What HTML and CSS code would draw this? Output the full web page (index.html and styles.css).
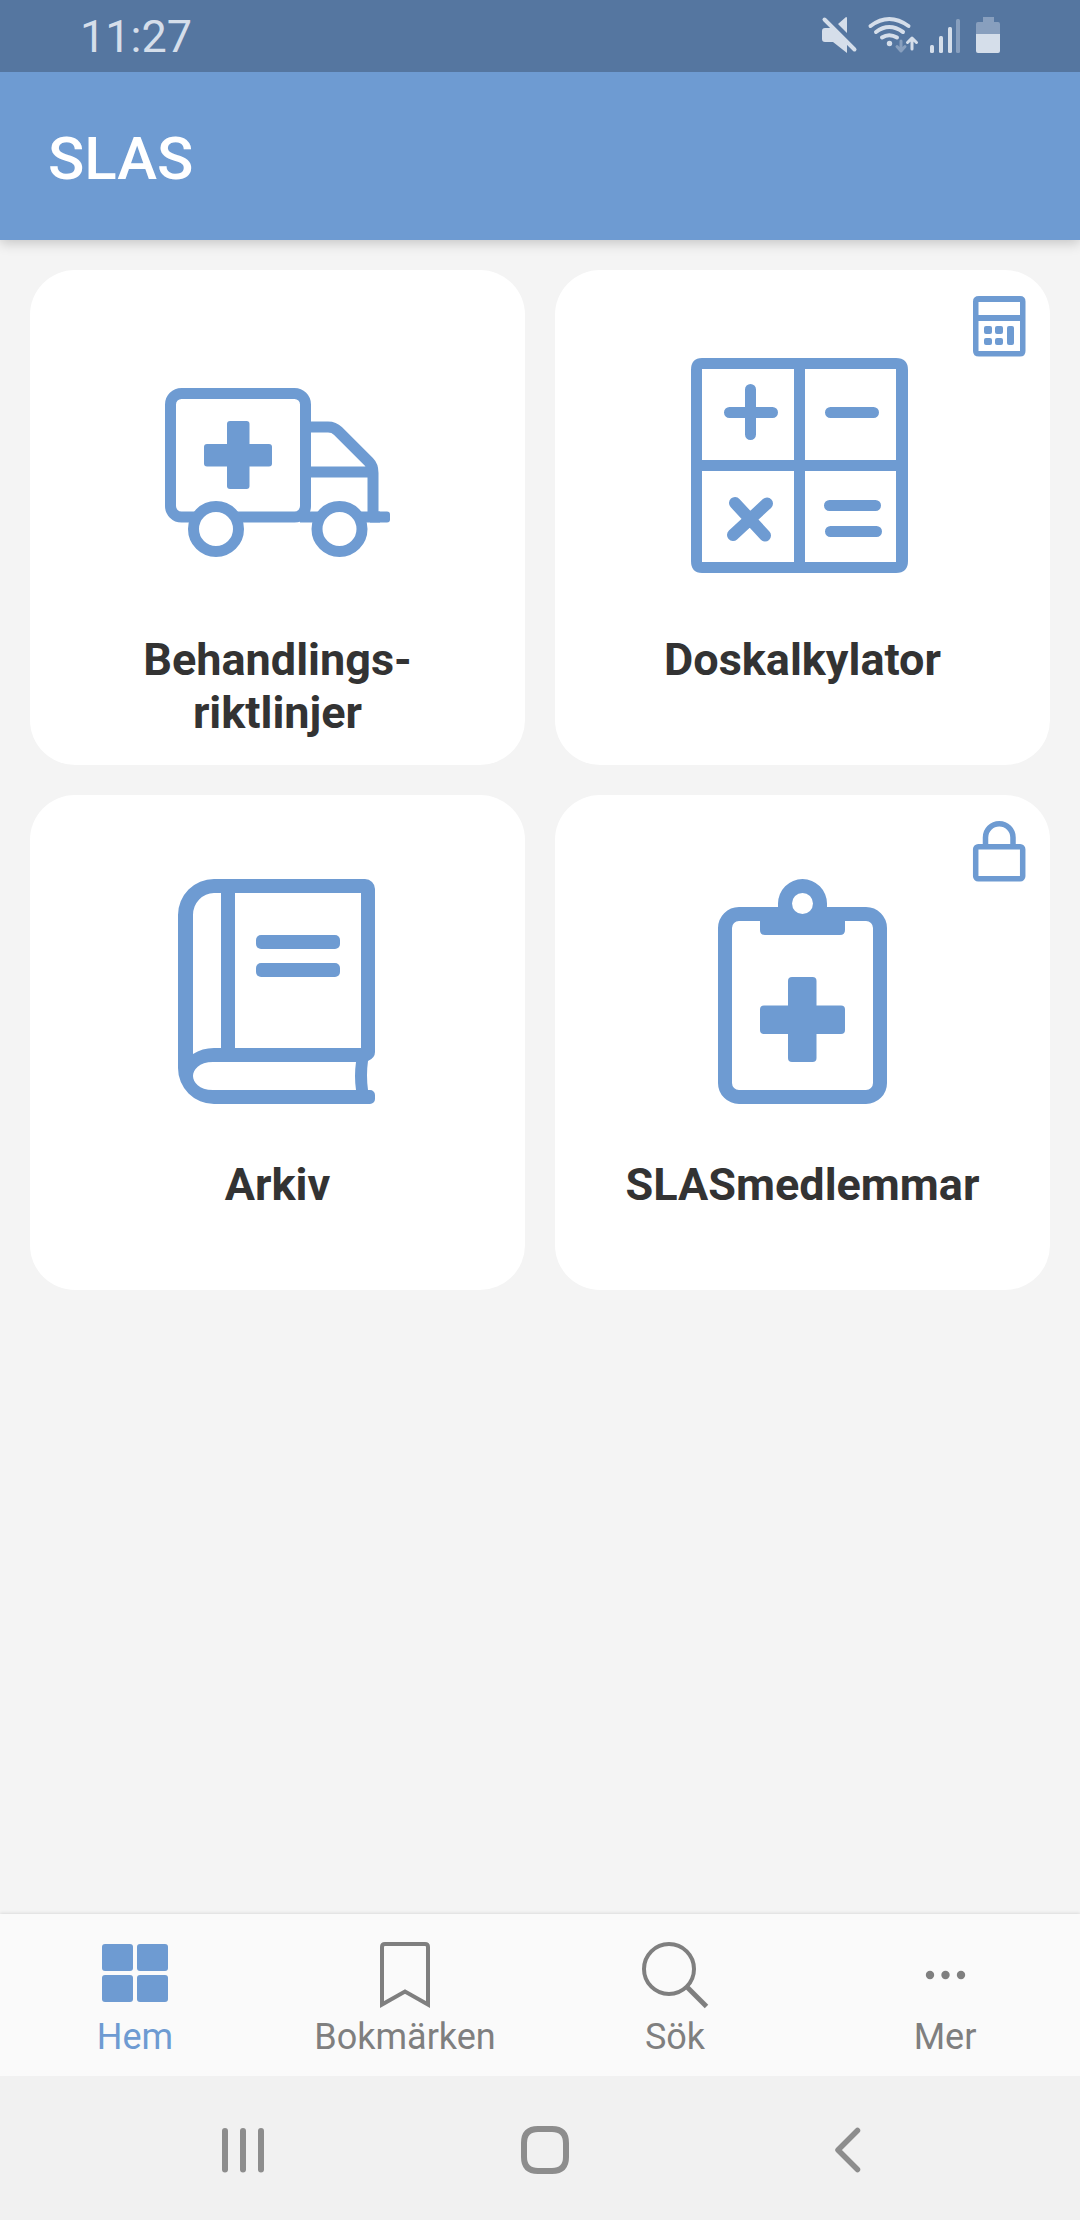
FILE: index.html
```html
<!DOCTYPE html>
<html lang="sv">
<head>
<meta charset="utf-8">
<meta name="viewport" content="width=device-width, initial-scale=1">
<title>SLAS</title>
<link rel="stylesheet" href="styles.css">
</head>
<body>
<div class="status-bar">
  <time class="clock">11:27</time>
  <svg class="status-icons" viewBox="820 0 180 72" aria-hidden="true">
    <path d="M822 31q0-3 3-3h6l16 16v9l-14-11h-8q-3 0-3-3zM838 24l8-7q1 0 1 1v15z"/>
    <path class="line" d="M824.500 19.500l30 30" stroke-width="4"/>
    <g class="line" stroke-width="4">
      <path d="M870.500 26q18.500-14 38 0M876 32q13-10 27 0M882 37.500q7-4.500 15 0"/>
    </g>
    <circle cx="889.500" cy="43.500" r="2.700"/>
    <path class="line dim" stroke-width="3" d="M901 41v10M897 46.500l4 4.500 4-4.500"/>
    <path class="line" stroke-width="3" d="M912 49v-11M907.500 42.500l4.500-4.500 4.500 4.500"/>
    <rect x="930" y="45" width="4" height="8" rx="1.500"/>
    <rect x="939" y="36" width="4" height="17" rx="1.500"/>
    <rect x="948" y="27" width="4" height="26" rx="1.500"/>
    <rect class="dim" x="956" y="19" width="4" height="34" rx="1.500"/>
    <path class="dim" d="M976 34V24q0-2 2-2h5v-5h11v5h4q2 0 2 2v10z"/>
    <path d="M976 34h24v17q0 2-2 2h-20q-2 0-2-2z"/>
  </svg>
</div>

<header class="app-bar"><h1 class="app-title">SLAS</h1></header>

<main class="content">
  <div class="cards">
    <a class="card" href="#riktlinjer">
      <svg class="card-icon" viewBox="165 354 225 225" aria-hidden="true">
        <g fill="none" stroke="currentColor" stroke-width="11">
          <rect x="170.500" y="393.500" width="135" height="123.500" rx="11"/>
          <path d="M305 427h23q6 0 10 4l31 31q4 4 4 11v44M305 472h67M300 517h80"/>
        </g>
        <path d="M370 511.500h17q3 0 3 3v5q0 3-3 3h-17z"/>
        <circle cx="216" cy="529" r="22.500" fill="#fff" stroke="currentColor" stroke-width="11"/>
        <circle cx="339.500" cy="529" r="22.500" fill="#fff" stroke="currentColor" stroke-width="11"/>
        <rect x="227" y="421" width="22.500" height="68" rx="3"/>
        <rect x="204" y="444" width="68" height="22.500" rx="3"/>
      </svg>
      <span class="card-label">Behandlings-<br>riktlinjer</span>
    </a>
    <a class="card" href="#doskalkylator">
      <svg class="card-icon" viewBox="690 354 225 225" aria-hidden="true">
        <path fill-rule="evenodd" d="M702 358h194q12 0 12 12v191q0 12-12 12h-194q-11 0-11-12v-191q0-12 11-12zM702 369v91h92v-91zM805 369v91h91v-91zM702 471v91h92v-91zM805 471v91h91v-91z"/>
        <path class="line" stroke-width="11" d="M729.500 412.500h43M750.500 389.500v45M830.500 412.500h43M829.500 505.500h46M830.500 531.500h46"/>
        <path class="line" stroke-width="12" d="M735 503l30 32.500M767 503.500l-34 31.500"/>
      </svg>
      <span class="card-label">Doskalkylator</span>
      <svg class="badge" viewBox="972 296 54 62" aria-hidden="true">
        <path fill-rule="evenodd" d="M979 296h41q5.500 0 5.500 5.500v49.500q0 5.500-5.500 5.500h-41q-6 0-6-5.500v-49.500q0-5.500 6-5.500zM978.500 302v13h41.500v-13zM978.500 321v30h41.500v-30z"/>
        <rect x="984" y="326" width="8" height="8" rx="2"/>
        <rect x="995" y="326" width="8" height="8" rx="2"/>
        <rect x="984" y="338" width="8" height="7" rx="2"/>
        <rect x="995" y="338" width="8" height="7" rx="2"/>
        <rect x="1007" y="326" width="7" height="19" rx="2"/>
      </svg>
    </a>
    <a class="card" href="#arkiv">
      <svg class="card-icon" viewBox="165 879 225 225" aria-hidden="true">
        <path fill-rule="evenodd" d="M214 879h151a10 10 0 0 1 10 10v163q0 6-7 9-2 14 0 29h2a5 5 0 0 1 5 5v4a5 5 0 0 1-5 5H214a36 36 0 0 1-36-36V915a36 36 0 0 1 36-36zM221 893h-7a21 22 0 0 0-21 22v139q9-6 21-6h7zM235 893v155h126V893zM213 1062c-14 0-20 8-20 14s6 14 20 14h143q-2-14 0-28z"/>
        <rect x="256" y="935" width="84" height="14" rx="5"/>
        <rect x="256" y="963" width="84" height="14" rx="5"/>
      </svg>
      <span class="card-label">Arkiv</span>
    </a>
    <a class="card" href="#medlemmar">
      <svg class="card-icon" viewBox="690 879 225 225" aria-hidden="true">
        <rect x="725" y="914" width="155" height="183" rx="14" fill="none" stroke="currentColor" stroke-width="14"/>
        <path d="M760 914h18v-10.500a24.500 24.500 0 0 1 49 0V914h18v16q0 5-5 5h-75q-5 0-5-5z"/>
        <circle cx="802.500" cy="903.500" r="10.500" fill="#fff"/>
        <rect x="788" y="977" width="28.500" height="85" rx="4"/>
        <rect x="760" y="1005.500" width="85" height="28.500" rx="4"/>
      </svg>
      <span class="card-label">SLASmedlemmar</span>
      <svg class="badge" viewBox="972 821 54 62" aria-hidden="true">
        <path fill="none" stroke="currentColor" stroke-width="5.500" d="M985.500 846v-8.500a13.700 13.700 0 0 1 27.500 0v8.500"/>
        <rect x="975.700" y="846.700" width="47" height="32" rx="2.500" fill="none" stroke="currentColor" stroke-width="5.500"/>
      </svg>
    </a>
  </div>
</main>

<nav class="tabs">
  <a class="tab tab-active" href="#hem" aria-current="page">
    <svg class="tab-icon" viewBox="99 1940 72 76" aria-hidden="true">
      <rect x="102" y="1944" width="31" height="27" rx="3"/>
      <rect x="137" y="1944" width="31" height="27" rx="3"/>
      <rect x="102" y="1975" width="31" height="27" rx="3"/>
      <rect x="137" y="1975" width="31" height="27" rx="3"/>
    </svg>
    <span>Hem</span>
  </a>
  <a class="tab" href="#bokmarken">
    <svg class="tab-icon" viewBox="369 1940 72 76" aria-hidden="true">
      <path fill="none" stroke="currentColor" stroke-width="4" d="M382 2004.500V1947q0-3 3-3h40q3 0 3 3v57.500l-23-13z"/>
    </svg>
    <span>Bokmärken</span>
  </a>
  <a class="tab" href="#sok">
    <svg class="tab-icon" viewBox="639 1940 72 76" aria-hidden="true">
      <g fill="none" stroke="currentColor" stroke-width="4">
        <circle cx="669" cy="1969" r="25"/>
        <path d="M687 1987l19.500 19.500" stroke-width="5"/>
      </g>
    </svg>
    <span>Sök</span>
  </a>
  <a class="tab" href="#mer">
    <svg class="tab-icon" viewBox="909 1940 72 76" aria-hidden="true">
      <circle cx="930" cy="1975" r="4.200"/>
      <circle cx="945.500" cy="1975" r="4.200"/>
      <circle cx="961" cy="1975" r="4.200"/>
    </svg>
    <span>Mer</span>
  </a>
</nav>

<div class="system-nav">
  <button class="system-button" type="button" aria-label="Senaste appar">
    <svg class="system-icon" viewBox="213 2120 60 60" aria-hidden="true">
      <path class="line" stroke-width="6" d="M225 2131v38.500M243 2131v38.500M261 2131v38.500"/>
    </svg>
  </button>
  <button class="system-button" type="button" aria-label="Startskärm">
    <svg class="system-icon" viewBox="515 2120 60 60" aria-hidden="true">
      <path fill="none" stroke="currentColor" stroke-width="6" d="M538 2129h14q14 0 14 14v14q0 14-14 14h-14q-14 0-14-14v-14q0-14 14-14z"/>
    </svg>
  </button>
  <button class="system-button" type="button" aria-label="Tillbaka">
    <svg class="system-icon" viewBox="817 2120 60 60" aria-hidden="true">
      <path class="line" stroke-width="5.500" d="M857.500 2130.500l-19.500 19.500 19.500 19.500"/>
    </svg>
  </button>
</div>
</body>
</html>
```
FILE: styles.css
```css
* {
  box-sizing: border-box;
}

body {
  margin: 0;
  min-height: 100vh;
  display: flex;
  flex-direction: column;
  background: #f4f4f4;
  color: #333;
  font-family: Roboto, "Liberation Sans", sans-serif;
}

svg {
  display: block;
  fill: currentColor;
}

a {
  color: inherit;
  text-decoration: none;
}

.line {
  fill: none;
  stroke: currentColor;
  stroke-linecap: round;
  stroke-linejoin: round;
}

.dim {
  opacity: 0.4;
}

.status-bar {
  height: 72px;
  padding: 0 80px;
  display: flex;
  align-items: center;
  justify-content: space-between;
  background: #5576a0;
  color: #d5deea;
  z-index: 1;
  position: relative;
}

.clock {
  padding-top: 2px;
  font-size: 45px;
  line-height: 72px;
}

.status-icons {
  width: 180px;
  height: 72px;
}

.app-bar {
  height: 168px;
  padding: 6px 48px 0;
  display: flex;
  align-items: center;
  background: #6e9bd2;
  color: #fff;
  box-shadow: 0 3px 12px rgba(0, 0, 0, 0.2);
}

.app-title {
  margin: 0;
  font-size: 60px;
  line-height: 72px;
  font-weight: 500;
}

.content {
  flex: 1;
  padding: 30px;
}

.cards {
  display: grid;
  grid-template-columns: 1fr 1fr;
  gap: 30px;
}

.card {
  position: relative;
  aspect-ratio: 1;
  padding-top: 84px;
  display: flex;
  flex-direction: column;
  align-items: center;
  gap: 54px;
  border-radius: 45px;
  background: #fff;
}

.card-icon {
  width: 225px;
  height: 225px;
  color: #6e9bd2;
}

.card-label {
  font-size: 45px;
  line-height: 53px;
  font-weight: 700;
  text-align: center;
}

.badge {
  position: absolute;
  top: 26px;
  right: 24px;
  width: 54px;
  height: 62px;
  color: #6e9bd2;
}

.tabs {
  height: 162px;
  display: grid;
  grid-template-columns: repeat(4, 1fr);
  background: #fafafa;
  box-shadow: 0 -1px 3px rgba(0, 0, 0, 0.1);
}

.tab {
  padding-top: 26px;
  display: flex;
  flex-direction: column;
  align-items: center;
  color: #7f7f7f;
  font-size: 36px;
  line-height: 42px;
}

.tab-active {
  color: #6e9bd2;
}

.tab-icon {
  width: 72px;
  height: 76px;
}

.system-nav {
  height: 144px;
  padding: 0 82px 0 92px;
  display: grid;
  grid-template-columns: repeat(3, 1fr);
  background: #f1f1f1;
  z-index: 1;
}

.system-button {
  padding: 4px 0 0;
  display: flex;
  align-items: center;
  justify-content: center;
  border: 0;
  background: none;
  color: #8d8d8d;
}

.system-icon {
  width: 60px;
  height: 60px;
}
```
